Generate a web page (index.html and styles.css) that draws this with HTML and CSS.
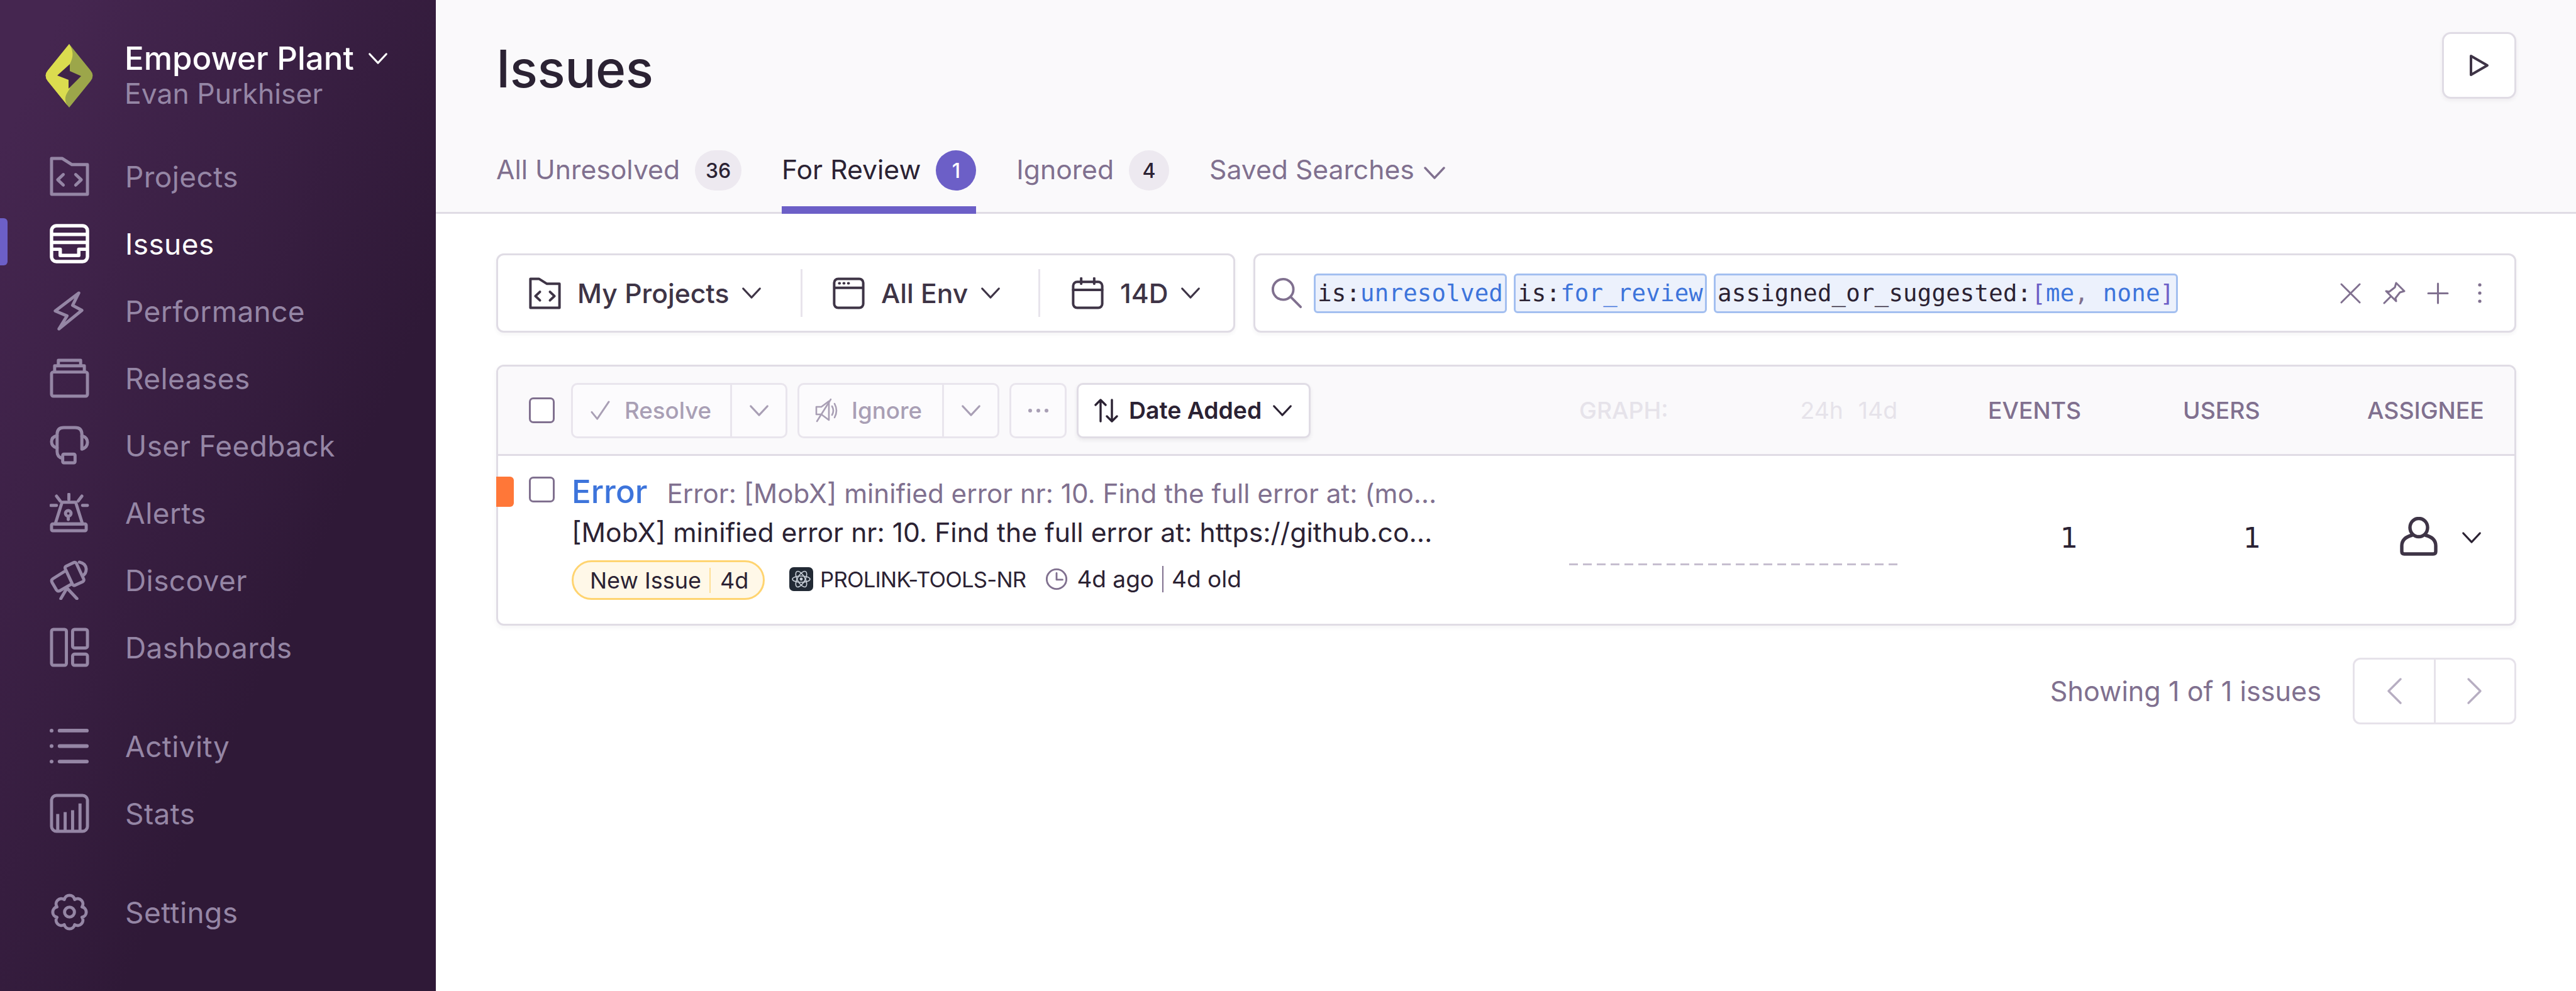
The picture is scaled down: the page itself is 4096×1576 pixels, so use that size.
FILE: index.html
```html
<!DOCTYPE html>
<html lang="en">
<head>
<meta charset="utf-8">
<title>Issues</title>
<link rel="stylesheet" href="styles.css">
</head>
<body>
<svg class="defs" width="0" height="0">
  <symbol id="chev" viewBox="0 0 36 24"><path d="M3 4 L18 20 L33 4" fill="none" stroke="currentColor" stroke-width="3.4" stroke-linecap="round" stroke-linejoin="round"/></symbol>
  <symbol id="folder" viewBox="0 0 64 64"><g fill="none" stroke="currentColor" stroke-width="5" stroke-linejoin="round" stroke-linecap="round"><path d="M3 3H20L36 13H61V61H3Z"/><path d="M22 29L13 37.5L22 46M42 29L51 37.5L42 46"/></g></symbol>
</svg>
<div class="app">
  <aside class="sidebar">
    <div class="org">
      <svg class="logo" viewBox="0 0 82 101"><path fill="#9ca64a" d="M41 0L75 42Q82 50 75 59L41 101L7 59Q0 50 7 42Z"/><path fill="#dbdc4f" d="M41 0L7 42Q0 50 7 59L41 101C30 88 36 80 42 71L42 32C46 24 50 14 41 0Z"/><path fill="#3f2349" d="M42 32L22 50L40 57L40 71L60 51L42 43Z"/></svg>
      <div class="org-text">
        <div class="org-name">Empower Plant <svg class="chev-org"><use href="#chev"/></svg></div>
        <div class="org-user">Evan Purkhiser</div>
      </div>
    </div>
    <nav class="nav-group">
      <a class="nav-item"><svg class="nav-icon" viewBox="0 0 64 64"><use href="#folder"/></svg><span>Projects</span></a>
      <a class="nav-item active"><svg class="nav-icon" viewBox="0 0 64 64"><g fill="none" stroke="currentColor" stroke-width="5.5" stroke-linejoin="round"><rect x="3" y="3" width="58" height="58" rx="8"/><path d="M3 17H61M3 30H61M3 41H17V51H47V41H61"/></g></svg><span>Issues</span></a>
      <a class="nav-item"><svg class="nav-icon" viewBox="0 0 64 64"><path d="M47 3L9 32L28 40L15 61L52 31L37 23Z" fill="none" stroke="currentColor" stroke-width="5" stroke-linejoin="round"/></svg><span>Performance</span></a>
      <a class="nav-item"><svg class="nav-icon" viewBox="0 0 64 64"><g fill="none" stroke="currentColor" stroke-width="5" stroke-linejoin="round"><rect x="3" y="22" width="58" height="39" rx="3"/><path d="M8 22V12H56V22M14 12V3H50V12"/></g></svg><span>Releases</span></a>
      <a class="nav-item"><svg class="nav-icon" viewBox="0 0 64 64"><g fill="none" stroke="currentColor" stroke-width="5" stroke-linejoin="round" stroke-linecap="round"><path d="M12 42V14Q12 3 23 3H41Q52 3 52 14V18M12 42Q12 51 21 53"/><path d="M12 16Q3 18 3 26Q3 34 12 36M52 16V38Q61 35 61 27Q61 19 52 16Z"/><rect x="21" y="46" width="20" height="14" rx="2"/></g></svg><span>User Feedback</span></a>
      <a class="nav-item"><svg class="nav-icon" viewBox="0 0 64 64"><g fill="none" stroke="currentColor" stroke-width="5" stroke-linejoin="round" stroke-linecap="round"><path d="M31 2V11M11 5L17 13M52 5L46 13M2 20H11M53 20H61"/><path d="M20 15H42L53 50H9Z"/><rect x="3" y="50" width="56" height="11" rx="2"/><circle cx="30" cy="33" r="4.5"/><path d="M30 38V43"/></g></svg><span>Alerts</span></a>
      <a class="nav-item"><svg class="nav-icon" viewBox="0 0 64 64"><g fill="none" stroke="currentColor" stroke-width="5" stroke-linejoin="round" stroke-linecap="round"><rect x="30" y="5" width="20" height="34" rx="3" transform="rotate(-25 40 22)"/><path d="M24 18L5 30Q2 32 4 36L11 48Q13 51 17 49L36 38"/><path d="M48 3Q58 5 59 14Q59 22 53 25"/><path d="M28 45L18 62M28 45L44 62"/></g></svg><span>Discover</span></a>
      <a class="nav-item"><svg class="nav-icon" viewBox="0 0 64 64"><g fill="none" stroke="currentColor" stroke-width="5" stroke-linejoin="round"><rect x="3" y="3" width="24" height="58" rx="3"/><rect x="37" y="3" width="24" height="30" rx="3"/><rect x="37" y="43" width="24" height="18" rx="3"/></g></svg><span>Dashboards</span></a>
    </nav>
    <nav class="nav-group">
      <a class="nav-item"><svg class="nav-icon" viewBox="0 0 64 64"><g fill="none" stroke="currentColor" stroke-width="6" stroke-linecap="round"><path d="M16 7H60M16 32H60M16 57H60"/><path d="M3 7H3.1M3 32H3.1M3 57H3.1"/></g></svg><span>Activity</span></a>
      <a class="nav-item"><svg class="nav-icon" viewBox="0 0 64 64"><g fill="none" stroke="currentColor" stroke-width="5" stroke-linejoin="round"><rect x="3" y="3" width="58" height="58" rx="8"/><path d="M13 33V61M25 30V61M37 27V61M49 16V61"/></g></svg><span>Stats</span></a>
    </nav>
    <nav class="nav-group">
      <a class="nav-item"><svg class="nav-icon" viewBox="0 0 64 64"><g fill="none" stroke="currentColor" stroke-width="5" stroke-linejoin="round"><path d="M52.3 23.6A8.6 8.6 0 0 1 52.3 40.4A8.6 8.6 0 0 1 40.4 52.3A8.6 8.6 0 0 1 23.6 52.3A8.6 8.6 0 0 1 11.7 40.4A8.6 8.6 0 0 1 11.7 23.6A8.6 8.6 0 0 1 23.6 11.7A8.6 8.6 0 0 1 40.4 11.7A8.6 8.6 0 0 1 52.3 23.6Z"/><circle cx="32" cy="32" r="8"/></g></svg><span>Settings</span></a>
    </nav>
  </aside>

  <main class="main">
    <header class="page-header">
      <div class="title-row">
        <h1 class="title">Issues</h1>
        <button class="play"><svg viewBox="0 0 32 36" class="play-icon"><path d="M3 3L29 18L3 33Z" fill="none" stroke="currentColor" stroke-width="4" stroke-linejoin="round"/></svg></button>
      </div>
      <div class="tabs">
        <a class="tab"><span>All Unresolved</span><span class="badge wide">36</span></a>
        <a class="tab current"><span>For Review</span><span class="badge primary">1</span></a>
        <a class="tab"><span>Ignored</span><span class="badge">4</span></a>
        <a class="tab"><span>Saved Searches</span><svg class="chev-tab"><use href="#chev"/></svg></a>
      </div>
    </header>

    <div class="content">
      <div class="toolbar">
        <div class="filters">
          <div class="filter f-proj">
            <svg class="f-icon" viewBox="0 0 64 64"><use href="#folder"/></svg><span>My Projects</span><svg class="chev-f"><use href="#chev"/></svg>
          </div>
          <div class="filter f-env">
            <svg class="f-icon" viewBox="0 0 64 64"><g fill="none" stroke="currentColor" stroke-width="5" stroke-linejoin="round"><rect x="3" y="3" width="58" height="58" rx="8"/><path d="M3 21H61"/><path d="M13 12H14M22 12H23M31 12H32" stroke-linecap="round"/></g></svg><span>All Env</span><svg class="chev-f"><use href="#chev"/></svg>
          </div>
          <div class="filter f-time">
            <svg class="f-icon" viewBox="0 0 64 64"><g fill="none" stroke="currentColor" stroke-width="5" stroke-linejoin="round" stroke-linecap="round"><rect x="3" y="9" width="58" height="52" rx="8"/><path d="M3 25H61M19 2V13M45 2V13"/></g></svg><span>14D</span><svg class="chev-f"><use href="#chev"/></svg>
          </div>
        </div>
        <div class="search">
          <svg class="s-icon" viewBox="0 0 52 52"><g fill="none" stroke="currentColor" stroke-width="4" stroke-linecap="round"><circle cx="20" cy="20" r="17"/><path d="M33 33L49 49"/></g></svg>
          <div class="tokens">
            <span class="token">is:<b>unresolved</b></span>
            <span class="token">is:<b>for_review</b></span>
            <span class="token">assigned_or_suggested:<i>[</i><b>me</b><u>,</u> <b>none</b><i>]</i></span>
          </div>
          <div class="s-actions">
            <svg viewBox="0 0 34 34" class="s-x"><path d="M2 2L32 32M32 2L2 32" fill="none" stroke="currentColor" stroke-width="3" stroke-linecap="round"/></svg>
            <svg viewBox="0 0 38 38" class="s-pin"><path d="M22 3L35 16L28 18L21 27L22 32L6 16L11 17L20 10Z M13 25L3 35" fill="none" stroke="currentColor" stroke-width="3" stroke-linejoin="round" stroke-linecap="round"/></svg>
            <svg viewBox="0 0 34 34" class="s-plus"><path d="M17 2V32M2 17H32" fill="none" stroke="currentColor" stroke-width="3" stroke-linecap="round"/></svg>
            <svg viewBox="0 0 10 34" class="s-dots"><g fill="currentColor"><circle cx="5" cy="4" r="2.6"/><circle cx="5" cy="17" r="2.6"/><circle cx="5" cy="30" r="2.6"/></g></svg>
          </div>
        </div>
      </div>

      <section class="panel">
        <div class="panel-head">
          <div class="actions">
            <span class="check"></span>
            <div class="btn-group g-resolve">
              <div class="seg s-main"><svg class="ic-check" viewBox="0 0 34 34"><path d="M3 20L12 31L31 3" fill="none" stroke="currentColor" stroke-width="3" stroke-linecap="round" stroke-linejoin="round"/></svg><span>Resolve</span></div>
              <div class="seg s-chev"><svg class="chev-b"><use href="#chev"/></svg></div>
            </div>
            <div class="btn-group g-ignore">
              <div class="seg s-main"><svg class="ic-mute" viewBox="0 0 40 40"><g fill="none" stroke="currentColor" stroke-width="2.6" stroke-linejoin="round" stroke-linecap="round"><path d="M3 14H11L23 5V35L11 26H3Z"/><path d="M28 13Q32 20 28 27M32 9Q38 20 32 31M4 37L26 2"/></g></svg><span>Ignore</span></div>
              <div class="seg s-chev"><svg class="chev-b"><use href="#chev"/></svg></div>
            </div>
            <div class="btn-group g-more"><span class="more-dots"></span></div>
            <button class="sort"><svg class="ic-sort" viewBox="0 0 38 38"><path d="M10 36V2M2 10L10 2L18 10M28 2V36M20 28L28 36L36 28" fill="none" stroke="currentColor" stroke-width="3.4" stroke-linecap="round" stroke-linejoin="round"/></svg><span>Date Added</span><svg class="chev-b"><use href="#chev"/></svg></button>
          </div>
          <div class="c-graph graph-head"><span>GRAPH:</span><span class="periods"><span>24h</span><span>14d</span></span></div>
          <div class="c-events h-events">EVENTS</div>
          <div class="c-users">USERS</div>
          <div class="c-assignee">ASSIGNEE</div>
        </div>
        <div class="row">
          <span class="level"></span>
          <div class="row-main">
            <span class="check"></span>
            <div class="issue">
              <div class="issue-title"><a class="err">Error</a><span class="err-msg">Error: [MobX] minified error nr: 10. Find the full error at: (mo…</span></div>
              <div class="issue-sub">[MobX] minified error nr: 10. Find the full error at: https://github.co…</div>
              <div class="issue-meta">
                <span class="pill"><span class="pill-a">New Issue</span><span class="pill-b">4d</span></span>
                <span class="proj"><svg class="proj-icon" viewBox="0 0 38 38"><rect width="38" height="38" rx="7" fill="#222a35"/><g fill="none" stroke="#c9d0d9" stroke-width="1.6"><ellipse cx="19" cy="19" rx="6" ry="14" transform="rotate(-30 19 19)"/><ellipse cx="19" cy="19" rx="6" ry="14" transform="rotate(30 19 19)"/><ellipse cx="19" cy="19" rx="14" ry="5"/></g><circle cx="19" cy="19" r="2.4" fill="#c9d0d9"/></svg><span class="proj-name">PROLINK-TOOLS-NR</span></span>
                <span class="times"><svg class="clock" viewBox="0 0 38 38"><g fill="none" stroke="currentColor" stroke-width="3" stroke-linecap="round" stroke-linejoin="round"><circle cx="19" cy="19" r="16.5"/><path d="M19 9V20H29"/></g></svg><span class="ago">4d ago</span><span class="old">4d old</span></span>
              </div>
            </div>
          </div>
          <div class="c-graph"><div class="spark"></div></div>
          <div class="c-events num n-events">1</div>
          <div class="c-users num n-users">1</div>
          <div class="c-assignee assign">
            <svg class="ic-user" viewBox="0 0 62 62"><g fill="none" stroke="currentColor" stroke-width="5.4" stroke-linejoin="round"><ellipse cx="31" cy="17" rx="14" ry="14.5"/><path d="M21 29Q4 33 4 46V55Q4 59 8 59H54Q58 59 58 55V46Q58 33 41 29"/></g></svg>
            <svg class="chev-user"><use href="#chev"/></svg>
          </div>
        </div>
      </section>

      <div class="pager">
        <span>Showing 1 of 1 issues</span>
        <div class="pager-btns">
          <div class="pg"><svg viewBox="0 0 28 44" class="pg-ic"><path d="M24 3L5 22L24 41" fill="none" stroke="currentColor" stroke-width="3.4" stroke-linecap="round" stroke-linejoin="round"/></svg></div>
          <div class="pg"><svg viewBox="0 0 28 44" class="pg-ic"><path d="M4 3L23 22L4 41" fill="none" stroke="currentColor" stroke-width="3.4" stroke-linecap="round" stroke-linejoin="round"/></svg></div>
        </div>
      </div>
    </div>
  </main>
</div>
</body>
</html>
```

FILE: styles.css
```css
* { box-sizing: border-box; }
html, body { margin: 0; height: 100%; background: #fff; }
body { font-family: Inter, "Liberation Sans", sans-serif; color: #2b2233; overflow: hidden; }
.defs { position: absolute; }
.app { display: flex; width: 4096px; height: 1576px; }

.sidebar {
  width: 693px; flex: none; display: flex; flex-direction: column; gap: 50px;
  padding-top: 70px; color: #9586a5;
  background: linear-gradient(294.17deg, #2f1937 35.57%, #452650 92.42%);
}
.org { display: flex; height: 107px; padding-left: 69px; gap: 47px; }
.logo { width: 82px; height: 101px; flex: none; }
.org-name { color: #fff; font-size: 51px; font-weight: 500; line-height: 46px; display: flex; align-items: center; white-space: nowrap; }
.chev-org { width: 32px; height: 22px; margin-left: 22px; color: #fff; }
.org-user { font-size: 44.5px; line-height: 52px; margin-top: 7px; }
.nav-group { display: flex; flex-direction: column; }
.nav-item { height: 107px; display: flex; align-items: center; padding-left: 79px; gap: 57px; font-size: 46px; letter-spacing: .4px; position: relative; }
.nav-icon { width: 63px; height: 63px; flex: none; }
.nav-item.active { color: #fff; }
.nav-item.active::before { content: ""; position: absolute; left: 0; top: 13px; width: 12px; height: 75px; background: #6c5fc7; border-radius: 0 6px 6px 0; }

.main { flex: 1; min-width: 0; display: flex; flex-direction: column; }
.page-header { background: #faf9fb; border-bottom: 3px solid #e0dce5; padding: 51px 95px 0 96px; height: 340px; }
.title-row { display: flex; justify-content: space-between; align-items: flex-start; height: 188px; }
.title { margin: 6px 0 0; font-size: 82px; line-height: 106px; font-weight: 500; letter-spacing: -.5px; }
.play { width: 118px; height: 106px; padding: 0; background: #fff; border: 3px solid #e0dce5; border-radius: 14px; box-shadow: 0 3px 6px rgba(43,34,51,.06); color: #3e3446; display: flex; align-items: center; justify-content: center; }
.play-icon { width: 32px; height: 36px; }
.tabs { display: flex; gap: 64px; color: #80708f; font-size: 42.67px; }
.tab { display: flex; gap: 24px; height: 101px; align-items: flex-start; border-bottom: 12px solid transparent; }
.tab > span:first-child { line-height: 62px; }
.tab.current { color: #2b2233; border-bottom-color: #6c5fc7; }
.badge { height: 64px; min-width: 64px; border-radius: 32px; background: #ede9f0; color: #2b2233; font-size: 32px; font-weight: 500; display: flex; align-items: center; justify-content: center; padding: 0 14px; }
.badge.wide { min-width: 74px; padding: 0 10px; }
.badge.primary { background: #6c5fc7; color: #fff; }
.chev-tab { width: 36px; height: 24px; margin-left: -10px; margin-top: 24px; }

.content { padding: 63px 95px 0 96px; }
.toolbar { display: flex; gap: 29px; height: 126px; }
.filters { width: 1175px; flex: none; display: flex; align-items: center; background: #fff; border: 3px solid #e0dce5; border-radius: 12px; box-shadow: 0 3px 6px rgba(43,34,51,.05); color: #3e3446; font-size: 42.67px; font-weight: 500; }
.filter { display: flex; align-items: center; height: 76px; white-space: nowrap; }
.f-proj { width: 484px; padding-left: 49px; border-right: 3px solid #e8e4ec; }
.f-env { width: 378px; padding-left: 48px; border-right: 3px solid #e8e4ec; }
.f-time { padding-left: 50px; }
.f-icon { width: 51px; height: 51px; flex: none; margin-right: 26px; }
.chev-f { width: 32px; height: 22px; margin-left: 20px; flex: none; }
.search { flex: 1; min-width: 0; display: flex; align-items: center; background: #fff; border: 3px solid #e0dce5; border-radius: 12px; box-shadow: 0 3px 6px rgba(43,34,51,.05); padding: 0 50px 0 25px; }
.s-icon { width: 50px; height: 50px; color: #80708f; flex: none; margin-right: 18px; }
.tokens { display: flex; gap: 11px; flex: 1; font-family: "DejaVu Sans Mono", monospace; font-size: 37.33px; letter-spacing: .22px; white-space: pre; }
.token { height: 63px; line-height: 56px; padding: 0 3px; background: #ecf1fc; border: 3px solid #a3bff0; border-radius: 6px; color: #2b2233; }
.token b { font-weight: 400; color: #3d74db; }
.token i { font-style: normal; color: #6c5fc7; }
.token u { text-decoration: none; color: #80708f; }
.s-actions { display: flex; align-items: center; color: #80708f; }
.s-x { width: 33px; height: 33px; margin-right: 34px; }
.s-pin { width: 38px; height: 38px; margin-right: 33px; }
.s-plus { width: 35px; height: 35px; margin-right: 44px; }
.s-dots { width: 10px; height: 34px; }

.panel { margin-top: 51px; height: 415px; border: 3px solid #e0dce5; border-radius: 12px; box-shadow: 0 3px 8px rgba(43,34,51,.05); }
.panel-head { height: 142px; display: flex; align-items: center; padding-left: 49px; padding-right: 50px; background: #faf9fb; border-bottom: 3px solid #e0dce5; border-radius: 9px 9px 0 0; font-size: 37.33px; font-weight: 500; color: #80708f; }
.actions { flex: 1; min-width: 0; display: flex; align-items: center; gap: 16px; font-size: 36.7px; }
.check { width: 41px; height: 41px; flex: none; background: #fff; border: 3px solid #80708f; border-radius: 7px; margin-right: 10px; }
.btn-group { display: flex; height: 88px; border: 3px solid #e9e5ed; border-radius: 10px; background: #fcfbfd; color: #a99fb5; }
.seg { display: flex; align-items: center; }
.s-main { border-right: 3px solid #e9e5ed; }
.g-resolve { width: 344px; }
.g-resolve .s-main { width: 253px; padding-left: 27px; gap: 22px; }
.g-ignore { width: 321px; }
.g-ignore .s-main { width: 230px; padding-left: 24px; gap: 19px; }
.s-chev { flex: 1; justify-content: center; }
.ic-check { width: 33px; height: 33px; }
.ic-mute { width: 40px; height: 40px; }
.chev-b { width: 32px; height: 22px; flex: none; }
.g-more { width: 91px; align-items: center; justify-content: center; }
.more-dots { width: 6px; height: 6px; border-radius: 50%; background: currentColor; box-shadow: -13px 0 currentColor, 13px 0 currentColor; }
.sort { width: 372px; height: 88px; padding: 0 0 0 25px; display: flex; align-items: center; background: #fff; border: 3px solid #e0dce5; border-radius: 10px; box-shadow: 0 3px 6px rgba(43,34,51,.08); color: #2b2233; font: inherit; font-size: 37.33px; font-weight: 600; }
.ic-sort { width: 38px; height: 38px; margin-right: 17px; }
.sort .chev-b { margin-left: 17px; }
.c-graph { width: 522px; flex: none; }
.graph-head { display: flex; justify-content: space-between; padding-left: 16px; color: #e6e3ea; }
.periods { display: flex; gap: 24px; font-weight: 400; }
.c-events { width: 454px; flex: none; }
.h-events { padding-left: 144px; }
.c-users { width: 293px; flex: none; }
.c-assignee { width: 184px; flex: none; }

.row { position: relative; display: flex; height: 267px; padding-right: 50px; }
.level { position: absolute; left: -3px; top: 33px; width: 28px; height: 48px; background: #ff7738; border-radius: 0 6px 6px 0; }
.row-main { flex: 1; min-width: 0; display: flex; padding: 33px 0 0 49px; }
.row-main .check { margin-right: 27px; }
.issue { min-width: 0; }
.issue-title { display: flex; align-items: baseline; gap: 31px; height: 48px; white-space: nowrap; }
.err { color: #3d74db; font-size: 51px; font-weight: 500; line-height: 48px; }
.err-msg { font-size: 42.2px; color: #80708f; }
.issue-sub { margin-top: 17px; font-size: 42.67px; line-height: 48px; white-space: nowrap; }
.issue-meta { display: flex; align-items: center; margin-top: 20px; font-size: 36px; white-space: nowrap; }
.pill { display: flex; align-items: center; width: 307px; height: 63px; padding-left: 26px; background: #fff8e8; border: 3px solid #ffd470; border-radius: 32px; }
.pill-a { padding-right: 13px; border-right: 2px solid #ffdf94; line-height: 40px; }
.pill-b { padding-left: 15px; }
.proj { display: flex; align-items: center; margin-left: 39px; gap: 11px; margin-top: -4px; }
.proj-icon { width: 38px; height: 38px; }
.proj-name { font-size: 34.67px; letter-spacing: -.75px; }
.times { display: flex; align-items: center; margin-left: 31px; margin-top: -4px; font-size: 37px; }
.clock { width: 36px; height: 36px; color: #80708f; margin-right: 14px; }
.ago { padding-right: 13px; border-right: 2px solid #80708f; line-height: 42px; }
.old { padding-left: 13px; }
.spark { margin-top: 171px; height: 3px; background: repeating-linear-gradient(90deg, #c6becf 0 14px, transparent 14px 22.09px); }
.num { font-family: "DejaVu Sans", sans-serif; font-size: 44px; padding-top: 102px; line-height: 58px; }
.n-events { padding-left: 259px; }
.n-users { padding-left: 96px; }
.assign { display: flex; align-items: flex-start; padding: 97px 0 0 51px; gap: 37px; }
.ic-user { width: 62px; height: 62px; flex: none; color: #3e3446; }
.chev-user { width: 32px; height: 22px; margin-top: 22px; flex: none; color: #2b2233; }

.pager { margin-top: 51px; display: flex; justify-content: flex-end; align-items: center; gap: 50px; color: #80708f; font-size: 43.2px; }
.pager-btns { display: flex; width: 260px; height: 106px; border: 3px solid #e6e2ea; border-radius: 12px; color: #b7aec2; }
.pg { flex: 1; display: flex; align-items: center; justify-content: center; }
.pg:first-child { border-right: 3px solid #e6e2ea; }
.pg-ic { width: 28px; height: 44px; }
```
